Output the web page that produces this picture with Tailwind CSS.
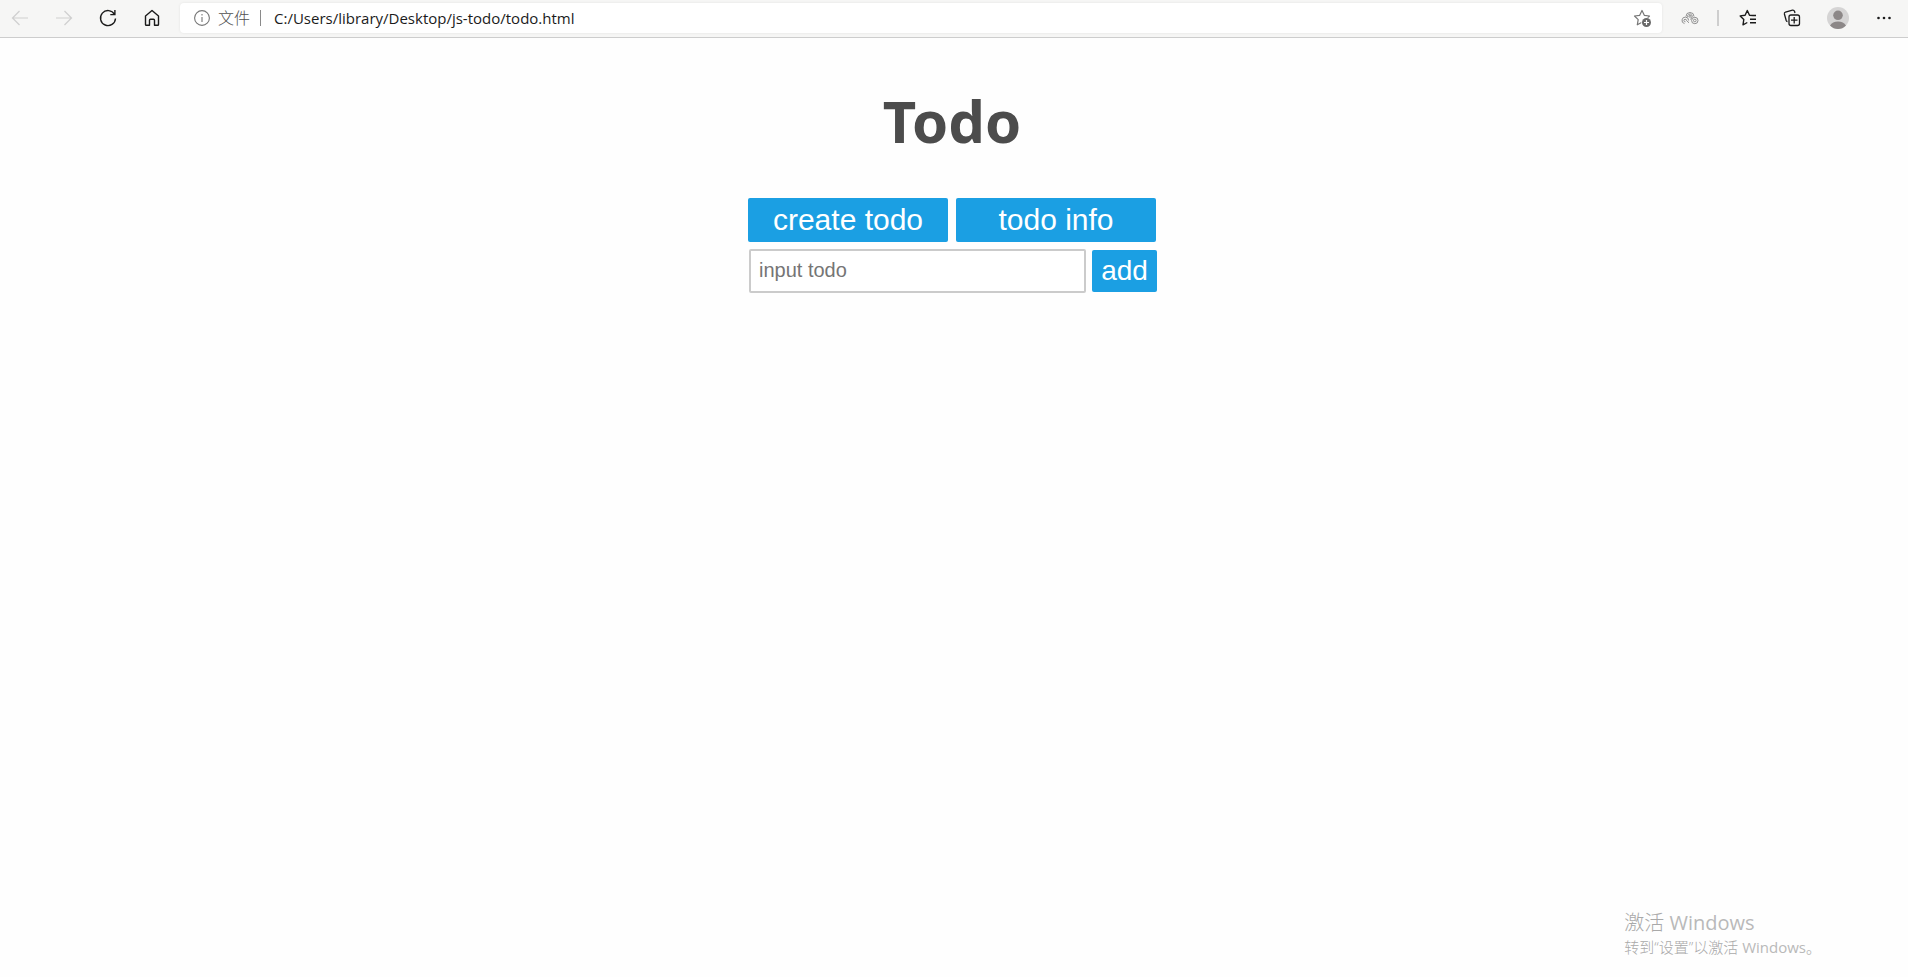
<!DOCTYPE html>
<html lang="zh-CN">
<head>
<meta charset="utf-8">
<title>Todo</title>
<script src="https://cdn.jsdelivr.net/npm/@tailwindcss/browser@4"></script>
</head>
<body class="min-h-screen flex flex-col bg-[#fefefe] font-['Open_Sans','Noto_Sans_CJK_SC',sans-serif]">
<header class="flex h-[38px] items-center border-b border-[#cdcdcd] bg-[#f6f6f5] pb-px">
  <nav class="flex w-[180px] shrink-0 items-center gap-5 pl-2 text-[#1b1b1b]" aria-label="Navigation">
    <button class="size-6 text-[#cfcfcf]" aria-label="Back"><svg class="size-6" viewBox="0 0 24 24" fill="none" stroke="currentColor" stroke-width="1.2"><path d="M20 12H4.500M11.500 5L4.500 12L11.500 19"/></svg></button>
    <button class="size-6 text-[#cfcfcf]" aria-label="Forward"><svg class="size-6" viewBox="0 0 24 24" fill="none" stroke="currentColor" stroke-width="1.200"><path d="M4 12H19.500M12.500 5L19.500 12L12.500 19"/></svg></button>
    <button class="size-6" aria-label="Refresh"><svg class="size-6" viewBox="0 0 24 24" fill="none" stroke="currentColor" stroke-width="1.4"><path d="M18.500 8.300A7.500 7.500 0 1 0 19.500 12.500M18.900 4V8.600H14.300"/></svg></button>
    <button class="size-6" aria-label="Home"><svg class="size-6" viewBox="0 0 24 24" fill="none" stroke="currentColor" stroke-width="1.400" stroke-linejoin="round"><path d="M12 4.500L5.500 10V18.500Q5.500 19.300 6.300 19.300H9.500V14.300Q9.500 13.300 10.500 13.300H13.500Q14.500 13.300 14.500 14.300V19.300H17.700Q18.500 19.300 18.500 18.500V10Z"/></svg></button>
  </nav>
  <div class="flex h-[30px] flex-1 items-center rounded-sm bg-white pl-[14px] pr-2 shadow-[0_0_3px_rgba(0,0,0,0.08)]">
    <svg class="size-4 shrink-0" viewBox="0 0 16 16" fill="none" stroke="#767676" stroke-width="1.100"><circle cx="8" cy="8" r="7.400"/><path d="M8 7V12M8 4V5.500"/></svg>
    <span class="ml-2 text-base leading-6 font-light text-[#505050]">文件</span>
    <span class="ml-[10px] h-4 w-px bg-[#8a8a8a]"></span>
    <input class="ml-[13px] h-6 min-w-0 flex-1 bg-transparent text-[15px] text-[#1b1b1b] outline-none" aria-label="Address" value="C:/Users/library/Desktop/js-todo/todo.html">
    <button class="size-6" aria-label="Add to favorites"><svg class="size-6" viewBox="0 0 24 24"><path d="M12 4.500L14.300 9.300L19.500 10L15.800 13.600L16.700 18.800L12 16.300L7.300 18.800L8.200 13.600L4.500 10L9.700 9.300Z" fill="none" stroke="#767676" stroke-width="1.200" stroke-linejoin="round"/><circle cx="16.500" cy="16.500" r="5.200" fill="#fff"/><circle cx="16.500" cy="16.500" r="4.500" fill="#6a6a6a"/><path d="M16.500 14V19M14 16.500H19" stroke="#fff" stroke-width="1.200"/></svg></button>
  </div>
  <div class="flex w-[246px] shrink-0 items-center pl-4 text-[#1b1b1b]">
    <button class="size-6" aria-label="Extension"><svg class="size-6" viewBox="0 0 24 24" fill="none" stroke="#8f8f8f" stroke-width="1"><path d="M6.500 17.600A3.300 3.300 0 1 1 10.600 14.500M7.500 15.800A1.300 1.300 0 1 1 8.500 14.500L11 16.800"/><path d="M8 10.500A4 4 0 0 1 16 10.500M9.800 11.200A2.300 2.300 0 1 1 13.500 12L12.500 13.500"/><circle cx="12" cy="10.300" r="1"/><circle cx="16.800" cy="14.500" r="3.200"/><circle cx="16.800" cy="14.500" r="1.300"/></svg></button>
    <span class="ml-[15px] h-4 w-0.5 bg-[#cecece]"></span>
    <button class="ml-[17px] size-6" aria-label="Favorites"><svg class="size-6" viewBox="0 0 24 24" fill="none" stroke="currentColor" stroke-width="1.400" stroke-linejoin="round"><path d="M17 9.500L13.500 9.200L11.300 4.500L9.100 9.200L4.200 9.900L7.800 13.500L7 18.800L11.300 16.500M14 9.500H20M14 13.200H20M14 16.800H20"/></svg></button>
    <button class="ml-5 size-6" aria-label="Collections"><svg class="size-6" viewBox="0 0 24 24" fill="none" stroke="currentColor" stroke-width="1.300"><rect x="9" y="9" width="10.500" height="10.500" rx="2"/><path d="M14.200 11V17.500M11 14.200H17.500M7.500 15.500Q6.500 15.300 6.200 14.500L4.400 8Q4.100 6.500 5.500 6L12.500 4.200Q14 4 14.500 5.300L15 7"/></svg></button>
    <button class="ml-[22px] size-6" aria-label="Profile"><svg class="size-6" viewBox="0 0 24 24"><circle cx="12" cy="12" r="11" fill="#d5d4d4"/><circle cx="12" cy="9.300" r="4.800" fill="#8c8787"/><path d="M4 19.500Q6.500 15.500 12 15.500T20 19.500Q16.500 23 12 23T4 19.500Z" fill="#8c8787"/></svg></button>
    <button class="ml-[22px] size-6" aria-label="Menu"><svg class="size-6" viewBox="0 0 24 24" fill="currentColor"><circle cx="6.500" cy="12" r="1.300"/><circle cx="12" cy="12" r="1.300"/><circle cx="17.500" cy="12" r="1.300"/></svg></button>
  </div>
</header>
<main class="flex flex-1 flex-col items-center pr-1 pt-[44px] font-['Liberation_Sans',sans-serif]">
  <h1 class="font-['Noto_Sans',sans-serif] text-[58px] leading-[78px] font-bold text-[#4c4c4c]">Todo</h1>
  <div class="mt-[38px] flex gap-2 text-[30px] leading-[44px] text-white">
    <button class="h-11 w-[200px] rounded-xs bg-[#1b9fe3]">create todo</button>
    <button class="h-11 w-[200px] rounded-xs bg-[#1b9fe3]">todo info</button>
  </div>
  <form class="mt-[7px] ml-0.5 flex items-center gap-[6px]">
    <input class="h-11 w-[337px] rounded-xs border-2 border-[#cbcbcb] bg-white px-2 pb-0.5 text-xl text-[#333] placeholder:text-[#757575] outline-none" type="text" aria-label="Todo" placeholder="input todo">
    <button type="button" class="h-[42px] w-[65px] rounded-xs bg-[#1b9fe3] text-[28px] leading-[42px] text-white">add</button>
  </form>
</main>
<aside class="flex flex-col self-end pr-[87px] pb-[18px] text-[#b9b9b9]">
  <p class="text-xl leading-6"><span class="font-light text-[#a9a9a9]">激活</span> Windows</p>
  <p class="text-[15px] leading-6"><span class="font-light text-[#a9a9a9]">转到“设置”以激活</span> Windows。</p>
</aside>
</body>
</html>
